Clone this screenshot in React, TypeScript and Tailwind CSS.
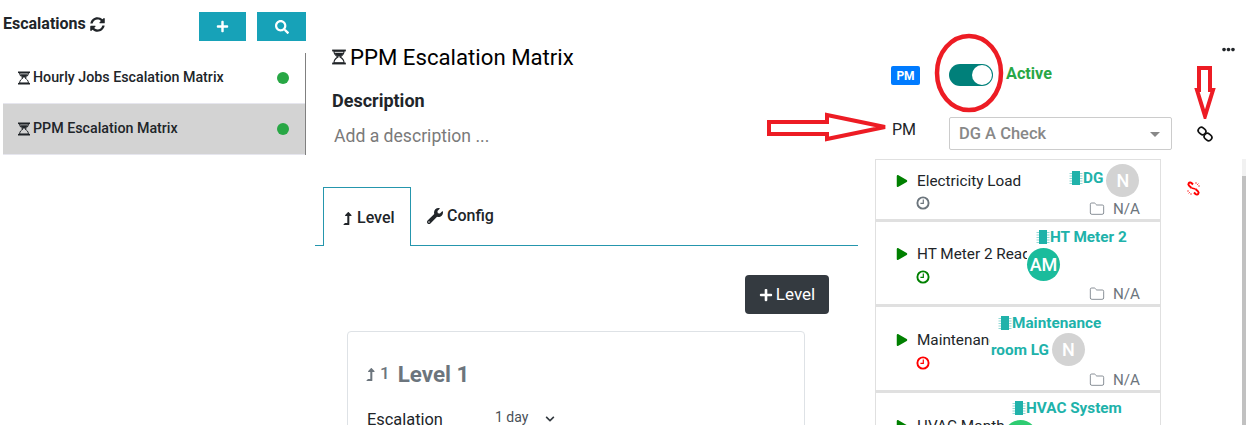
import { Folder } from "lucide-react";
import {
  FaChevronDown,
  FaEllipsisH,
  FaLevelUpAlt,
  FaPlay,
  FaPlus,
  FaSearch,
  FaSyncAlt,
  FaWrench,
} from "react-icons/fa";

interface CardProps {
  name: string;
  clock: string;
  clockPad: string;
  leftClass: string;
  namePad: string;
  rightPad: string;
  footPad: string;
  tagPad: string;
  tag: string;
  tail?: string;
  initials?: string;
  avatarClass?: string;
  rowClass: string;
  cardClass: string;
}

const cards: CardProps[] = [
  {
    name: "Electricity Load",
    clock: "#6c757d",
    clockPad: "mt-[6px]",
    leftClass: "w-[193px]",
    namePad: "pt-[12px]",
    rightPad: "pt-[4px]",
    footPad: "mt-[3px]",
    tagPad: "pt-[5px]",
    tag: "DG",
    initials: "N",
    avatarClass: "bg-[#d3d3d3] ml-[3px]",
    rowClass: "flex items-start",
    cardClass: "h-[62px]",
  },
  {
    name: "HT Meter 2 Reading",
    clock: "#008000",
    clockPad: "mt-[7px]",
    leftClass: "w-[151px]",
    namePad: "pt-[23px]",
    rightPad: "pt-[6px]",
    footPad: "mt-[4px]",
    tagPad: "pl-[9px]",
    tag: "HT Meter 2",
    initials: "AM",
    avatarClass: "bg-[#1abc9c] mt-[2px]",
    rowClass: "flex flex-col items-start",
    cardClass: "h-[85px]",
  },
  {
    name: "Maintenance Room",
    clock: "#ff0000",
    clockPad: "mt-[7px]",
    leftClass: "w-[115px] pr-[1px]",
    namePad: "pt-[24px]",
    rightPad: "pt-[7px]",
    footPad: "mt-[5px]",
    tagPad: "pl-[7px]",
    tag: "Maintenance",
    tail: "room LG",
    initials: "N",
    avatarClass: "bg-[#d3d3d3] ml-[3px]",
    rowClass: "flex flex-col items-start",
    cardClass: "h-[86px]",
  },
  {
    name: "HVAC Monthly",
    clock: "#008000",
    clockPad: "mt-[7px]",
    leftClass: "w-[128px]",
    namePad: "pt-[24px]",
    rightPad: "pt-[6px]",
    footPad: "mt-[5px]",
    tagPad: "pl-[8px]",
    tag: "HVAC System",
    initials: "",
    avatarClass: "bg-[#2ecc71] mt-[3px]",
    rowClass: "flex flex-col items-start",
    cardClass: "h-[86px]",
  },
];

function Hourglass({ size, className }: { size: number; className?: string }) {
  return (
    <svg width={size} height={size} viewBox="0 0 14 14" className={className} fill="currentColor">
      <rect x="1" y="0.5" width="12" height="1.6" />
      <rect x="1" y="11.9" width="12" height="1.6" />
      <path d="M2.6 2H11.4C11.4 4.6 9.6 6 8 7C9.6 8 11.4 9.4 11.4 12H2.6C2.6 9.4 4.4 8 6 7C4.4 6 2.6 4.6 2.6 2Z" fill="none" stroke="currentColor" strokeWidth="1" />
      <path d="M3.2 3.2H10.8C10.4 4.8 8.8 6 7 6.8C5.2 6 3.6 4.8 3.2 3.2Z" />
    </svg>
  );
}

function Clock({ color, className }: { color: string; className: string }) {
  return (
    <svg width="14" height="14" viewBox="0 0 14 14" className={`ml-[20px] ${className}`} fill="none" stroke={color}>
      <circle cx="7" cy="7" r="5.6" strokeWidth="1.9" />
      <path d="M7.3 3.6V7.4H4.4" strokeWidth="1.2" />
    </svg>
  );
}

function Chip() {
  return (
    <svg width="14" height="14" viewBox="0 0 14 14" className="shrink-0" fill="#20b2aa">
      <rect x="3" y="0" width="8" height="14" />
      <path d="M0.5 2.5H3M0.5 5H3M0.5 7.5H3M0.5 10H3M0.5 12.5H3M11 2.5H13.5M11 5H13.5M11 7.5H13.5M11 10H13.5M11 12.5H13.5" stroke="#20b2aa" strokeWidth="0.8" opacity="0.6" />
    </svg>
  );
}

function TaskCard(props: CardProps) {
  return (
    <div className={`flex border border-b-2 border-[#e0e0e0] ${props.cardClass}`}>
      <div className={`shrink-0 pl-[20px] ${props.leftClass} ${props.namePad}`}>
        <div className="flex items-center">
          <FaPlay className="shrink-0 text-[12px] text-[#008000]" />
          <div className="ml-[9px] overflow-hidden whitespace-nowrap text-[15.3px] leading-[18px] text-[#212529]">
            {props.name}
          </div>
        </div>
        <Clock color={props.clock} className={props.clockPad} />
      </div>
      <div className={`flex flex-1 flex-col pr-[20px] ${props.rightPad}`}>
        <div className={props.rowClass}>
          <div className={`flex items-center whitespace-nowrap text-[15.3px] font-bold leading-[18px] text-[#20b2aa] ${props.tagPad}`}>
            <Chip />
            <span>{props.tag}</span>
          </div>
          {props.tail ? (
            <div className="mt-[1px] flex items-center text-[15.3px] font-bold leading-[18px] text-[#20b2aa]">
              <span>{props.tail}</span>
              <span className={`flex h-[33px] w-[33px] items-center justify-center rounded-full text-[18px] font-medium text-white ${props.avatarClass}`}>
                {props.initials}
              </span>
            </div>
          ) : (
            <span className={`flex h-[33px] w-[33px] items-center justify-center rounded-full text-[18px] font-medium text-white ${props.avatarClass}`}>
              {props.initials}
            </span>
          )}
        </div>
        <div className={`flex items-center justify-end text-[15.2px] leading-[18px] text-[#6c757d] ${props.footPad}`}>
          <Folder size={16} strokeWidth={1.2} />
          <span className="ml-[8px]">N/A</span>
        </div>
      </div>
    </div>
  );
}

export default function App() {
  return (
    <div className="relative flex h-[425px] w-[1246px] overflow-hidden bg-white font-['Roboto',sans-serif] text-[#212529]">
      {/* left list */}
      <div className="w-[306px] shrink-0">
        <div className="flex h-[53px] items-start pt-[12px]">
          <div className="flex h-[24px] w-[199px] items-center pl-[3px] text-[16px] font-bold">
            Escalations
            <FaSyncAlt className="ml-[4px] text-[15px]" />
          </div>
          <button className="flex h-[29px] w-[47px] items-center justify-center bg-[#17a2b8] text-white">
            <FaPlus className="text-[13px]" />
          </button>
          <button className="ml-[11px] flex h-[29px] w-[49px] items-center justify-center bg-[#17a2b8] text-white">
            <FaSearch className="text-[14px]" />
          </button>
        </div>
        <div className="ml-[3px] border-r border-[#808080]">
          <div className="flex h-[51px] items-center border-b border-[#e6e6ee] pl-[14px] pr-[16px] text-[14.25px] font-medium">
            <Hourglass size={14} className="mr-[2px]" />
            <span className="flex-1">Hourly Jobs Escalation Matrix</span>
            <span className="h-[12px] w-[12px] rounded-full bg-[#28a745]" />
          </div>
          <div className="flex h-[51px] items-center border-b border-[#e6e6ee] bg-[#d3d3d3] pl-[14px] pr-[16px] text-[14.25px] font-medium">
            <Hourglass size={14} className="mr-[2px]" />
            <span className="flex-1">PPM Escalation Matrix</span>
            <span className="h-[12px] w-[12px] rounded-full bg-[#28a745]" />
          </div>
        </div>
      </div>

      {/* main */}
      <div className="w-[552px] shrink-0 pt-[44px]">
        <div className="ml-[25px] flex h-[26px] items-center text-[22.2px] leading-[26px] text-black">
          <Hourglass size={16} className="mr-[3px] text-[#212529]" />
          PPM Escalation Matrix
        </div>
        <div className="ml-[26px] mt-[20px] text-[18px] font-bold leading-[22px]">Description</div>
        <div className="ml-[28px] mt-[12px] text-[17.6px] leading-[24px] text-[#7a7a7a]">Add a description ...</div>

        <div className="ml-[9px] mt-[39px] flex h-[59px] border-b border-[#2596ad] pl-[8px]">
          <div className="-mb-px flex h-[59px] w-[88px] items-center border border-b-0 border-[#2596ad] bg-white pl-[17px] pt-[2px] text-[16px] font-medium">
            <FaLevelUpAlt className="mr-[3px] text-[13px]" />
            Level
          </div>
          <div className="flex h-[56px] items-center pl-[16px] pt-[2px] text-[16px] font-medium">
            <FaWrench className="mr-[4px] text-[16px]" />
            Config
          </div>
        </div>

        <div className="mt-[29px] flex justify-end pr-[29px]">
          <button className="flex h-[39px] w-[84px] items-center justify-center rounded-[4px] bg-[#343a40] text-[17px] text-white">
            <FaPlus className="mr-[3px] text-[14px]" />
            Level
          </button>
        </div>

        <div className="ml-[41px] mt-[17px] h-[200px] w-[458px] rounded-[4px] border border-[#dee2e6] px-[16px] pt-[28px]">
          <div className="flex items-center text-[#6c757d]">
            <FaLevelUpAlt className="text-[13px]" />
            <span className="ml-[3px] text-[17px] font-medium">1</span>
            <span className="ml-[8px] text-[22.4px] font-bold leading-[28px]">Level 1</span>
          </div>
          <div className="mt-[20px] flex items-start text-[16.4px] leading-[24px]">
            <span className="ml-[3px] w-[128px]">Escalation</span>
            <span className="text-[14px] leading-[18px] text-[#495057]">1 day</span>
            <FaChevronDown className="ml-[17px] mt-[6px] text-[10px] text-[#343a40]" />
          </div>
        </div>
      </div>

      {/* right column */}
      <div className="relative flex-1">
        <div className="flex h-[117px] items-start pt-[64px]">
          <span className="ml-[33px] mt-[2px] flex h-[19px] w-[29px] items-center justify-center rounded-[2px] bg-[#007bff] text-[12px] font-bold text-white">
            PM
          </span>
          <div className="ml-[29px] flex h-[22px] w-[44px] items-center justify-end rounded-full bg-[#00807a] pr-[1px]">
            <span className="h-[20px] w-[20px] rounded-full bg-white" />
          </div>
          <span className="ml-[13px] pt-[1px] text-[16.2px] font-bold leading-[18px] text-[#28a745]">Active</span>
        </div>
        <div className="flex items-center">
          <span className="ml-[34px] w-[57px] pb-[8px] text-[16px] leading-[20px]">PM</span>
          <div className="flex h-[33px] w-[223px] items-center justify-between rounded-[2px] border border-[#cccccc] pl-[9px] pr-[11px] pt-[1px] text-[16.5px] font-medium text-[#888888]">
            DG A Check
            <span className="h-0 w-0 border-x-[5px] border-t-[5px] border-x-transparent border-t-[#888888]" />
          </div>
          {/* link icon, chain running top-left to bottom-right */}
          <svg width="16" height="16" viewBox="0 0 16 16" className="ml-[25px]" fill="none" stroke="#111111" strokeWidth="1.7">
            <rect x="1" y="1.8" width="8" height="6.4" rx="3.2" transform="rotate(40 5 5)" />
            <rect x="7" y="7.8" width="8" height="6.4" rx="3.2" transform="rotate(40 11 11)" />
          </svg>
        </div>
        <div className="ml-[17px] mt-[9px] w-[286px]">
          {cards.map((card) => (
            <TaskCard key={card.tag} {...card} />
          ))}
        </div>
        <FaEllipsisH className="absolute left-[364px] top-[43px] text-[13px] text-[#212529]" />
        {/* broken link */}
        <svg width="15" height="15" viewBox="0 0 15 15" className="absolute left-[328px] top-[181px]" fill="none" stroke="#ff0000">
          <path d="M7 3.5L5.5 2C4.6 1.2 3.4 1.4 2.8 2.2C2.2 3 2.4 4 3 4.6L5.5 7" strokeWidth="2" />
          <path d="M8 11.5L9.5 13C10.4 13.8 11.6 13.6 12.2 12.8C12.8 12 12.6 11 12 10.4L9.5 8" strokeWidth="2" />
          <path d="M5.5 7L9.5 8" strokeWidth="1.6" />
          <path d="M10 1V3M12.5 2.5L11 4M14 5H12M1 10H3M2.5 12.5L4 11M5 14V12" strokeWidth="0.7" />
        </svg>
        <div className="absolute right-0 top-[159px] h-[266px] w-[4px] bg-[#f1f1f1] pt-[17px]">
          <div className="h-full bg-[#c1c1c1]" />
        </div>
      </div>

      {/* red annotations */}
      <svg className="absolute left-[934px] top-[33px]" width="70" height="80" viewBox="0 0 70 80">
        <ellipse cx="35" cy="40" rx="32" ry="37" fill="none" stroke="#ed1c24" strokeWidth="4.5" />
      </svg>
      <svg className="absolute left-[766px] top-[112px]" width="124" height="30" viewBox="0 0 124 30">
        <path d="M3 10H61V3L119 15L61 27V22H3Z" fill="#fff" stroke="#ed1c24" strokeWidth="4" />
      </svg>
      <svg className="absolute left-[1194px] top-[65px]" width="22" height="54" viewBox="0 0 22 54">
        <path d="M5 3H16V25H19L11 51L3 25H5Z" fill="#fff" stroke="#ed1c24" strokeWidth="4" />
      </svg>
    </div>
  );
}
